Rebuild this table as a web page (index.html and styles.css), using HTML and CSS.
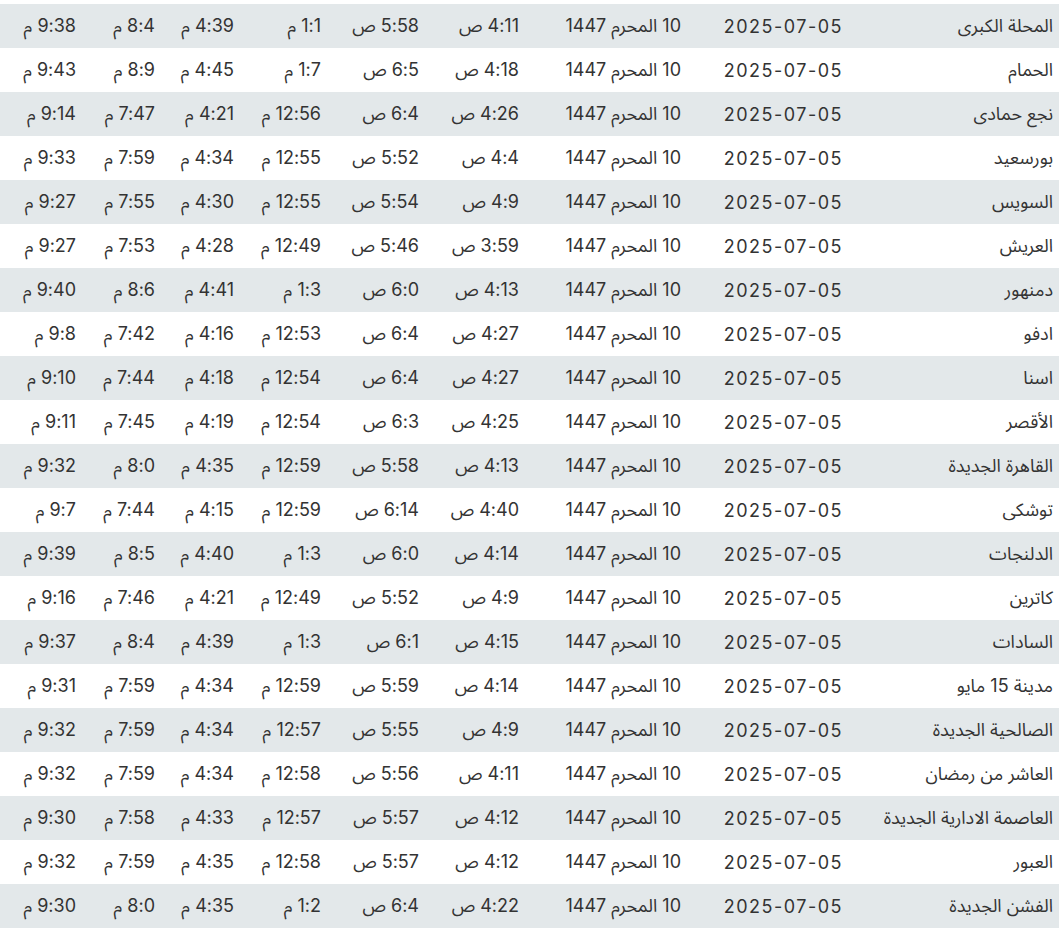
FILE: index.html
```html
<!DOCTYPE html>
<html lang="ar" dir="rtl">
<head>
<meta charset="utf-8">
<title>مواقيت الصلاة</title>
<link rel="stylesheet" href="styles.css">
</head>
<body>
<table class="times">
<colgroup>
<col class="c-city"><col class="c-date"><col class="c-hijri"><col class="c-fajr"><col class="c-sun"><col class="c-dhuhr"><col class="c-asr"><col class="c-maghrib"><col class="c-isha">
</colgroup>
<tbody>
<tr><td class="city">المحلة الكبرى</td><td class="date">2025-07-05</td><td>10 المحرم 1447</td><td>4:11 ص</td><td>5:58 ص</td><td>1:1 م</td><td>4:39 م</td><td>8:4 م</td><td>9:38 م</td></tr>
<tr><td class="city">الحمام</td><td class="date">2025-07-05</td><td>10 المحرم 1447</td><td>4:18 ص</td><td>6:5 ص</td><td>1:7 م</td><td>4:45 م</td><td>8:9 م</td><td>9:43 م</td></tr>
<tr><td class="city">نجع حمادى</td><td class="date">2025-07-05</td><td>10 المحرم 1447</td><td>4:26 ص</td><td>6:4 ص</td><td>12:56 م</td><td>4:21 م</td><td>7:47 م</td><td>9:14 م</td></tr>
<tr><td class="city">بورسعيد</td><td class="date">2025-07-05</td><td>10 المحرم 1447</td><td>4:4 ص</td><td>5:52 ص</td><td>12:55 م</td><td>4:34 م</td><td>7:59 م</td><td>9:33 م</td></tr>
<tr><td class="city">السويس</td><td class="date">2025-07-05</td><td>10 المحرم 1447</td><td>4:9 ص</td><td>5:54 ص</td><td>12:55 م</td><td>4:30 م</td><td>7:55 م</td><td>9:27 م</td></tr>
<tr><td class="city">العريش</td><td class="date">2025-07-05</td><td>10 المحرم 1447</td><td>3:59 ص</td><td>5:46 ص</td><td>12:49 م</td><td>4:28 م</td><td>7:53 م</td><td>9:27 م</td></tr>
<tr><td class="city">دمنهور</td><td class="date">2025-07-05</td><td>10 المحرم 1447</td><td>4:13 ص</td><td>6:0 ص</td><td>1:3 م</td><td>4:41 م</td><td>8:6 م</td><td>9:40 م</td></tr>
<tr><td class="city">ادفو</td><td class="date">2025-07-05</td><td>10 المحرم 1447</td><td>4:27 ص</td><td>6:4 ص</td><td>12:53 م</td><td>4:16 م</td><td>7:42 م</td><td>9:8 م</td></tr>
<tr><td class="city">اسنا</td><td class="date">2025-07-05</td><td>10 المحرم 1447</td><td>4:27 ص</td><td>6:4 ص</td><td>12:54 م</td><td>4:18 م</td><td>7:44 م</td><td>9:10 م</td></tr>
<tr><td class="city">الأقصر</td><td class="date">2025-07-05</td><td>10 المحرم 1447</td><td>4:25 ص</td><td>6:3 ص</td><td>12:54 م</td><td>4:19 م</td><td>7:45 م</td><td>9:11 م</td></tr>
<tr><td class="city">القاهرة الجديدة</td><td class="date">2025-07-05</td><td>10 المحرم 1447</td><td>4:13 ص</td><td>5:58 ص</td><td>12:59 م</td><td>4:35 م</td><td>8:0 م</td><td>9:32 م</td></tr>
<tr><td class="city">توشكى</td><td class="date">2025-07-05</td><td>10 المحرم 1447</td><td>4:40 ص</td><td>6:14 ص</td><td>12:59 م</td><td>4:15 م</td><td>7:44 م</td><td>9:7 م</td></tr>
<tr><td class="city">الدلنجات</td><td class="date">2025-07-05</td><td>10 المحرم 1447</td><td>4:14 ص</td><td>6:0 ص</td><td>1:3 م</td><td>4:40 م</td><td>8:5 م</td><td>9:39 م</td></tr>
<tr><td class="city">كاترين</td><td class="date">2025-07-05</td><td>10 المحرم 1447</td><td>4:9 ص</td><td>5:52 ص</td><td>12:49 م</td><td>4:21 م</td><td>7:46 م</td><td>9:16 م</td></tr>
<tr><td class="city">السادات</td><td class="date">2025-07-05</td><td>10 المحرم 1447</td><td>4:15 ص</td><td>6:1 ص</td><td>1:3 م</td><td>4:39 م</td><td>8:4 م</td><td>9:37 م</td></tr>
<tr><td class="city">مدينة 15 مايو</td><td class="date">2025-07-05</td><td>10 المحرم 1447</td><td>4:14 ص</td><td>5:59 ص</td><td>12:59 م</td><td>4:34 م</td><td>7:59 م</td><td>9:31 م</td></tr>
<tr><td class="city">الصالحية الجديدة</td><td class="date">2025-07-05</td><td>10 المحرم 1447</td><td>4:9 ص</td><td>5:55 ص</td><td>12:57 م</td><td>4:34 م</td><td>7:59 م</td><td>9:32 م</td></tr>
<tr><td class="city">العاشر من رمضان</td><td class="date">2025-07-05</td><td>10 المحرم 1447</td><td>4:11 ص</td><td>5:56 ص</td><td>12:58 م</td><td>4:34 م</td><td>7:59 م</td><td>9:32 م</td></tr>
<tr><td class="city">العاصمة الادارية الجديدة</td><td class="date">2025-07-05</td><td>10 المحرم 1447</td><td>4:12 ص</td><td>5:57 ص</td><td>12:57 م</td><td>4:33 م</td><td>7:58 م</td><td>9:30 م</td></tr>
<tr><td class="city">العبور</td><td class="date">2025-07-05</td><td>10 المحرم 1447</td><td>4:12 ص</td><td>5:57 ص</td><td>12:58 م</td><td>4:35 م</td><td>7:59 م</td><td>9:32 م</td></tr>
<tr><td class="city">الفشن الجديدة</td><td class="date">2025-07-05</td><td>10 المحرم 1447</td><td>4:22 ص</td><td>6:4 ص</td><td>1:2 م</td><td>4:35 م</td><td>8:0 م</td><td>9:30 م</td></tr>
</tbody>
</table>
</body>
</html>
```
FILE: styles.css
```css
html, body {
  margin: 0;
  padding: 0;
  background: #ffffff;
}
body {
  padding-top: 4px;
  font-family: "Inter", "Noto Sans Arabic", "Noto Naskh Arabic", "DejaVu Sans", sans-serif;
  color: #333333;
}
.times {
  width: 1059px;
  border-collapse: collapse;
  table-layout: fixed;
}
.c-city { width: 208px; }
.c-date { width: 162px; }
.c-hijri { width: 162px; }
.c-fajr { width: 100px; }
.c-sun { width: 98px; }
.c-dhuhr { width: 87px; }
.c-asr { width: 79px; }
.c-maghrib { width: 79px; }
.c-isha { width: 84px; }
.times td {
  height: 44px;
  padding: 0 8px 0 0;
  text-align: right;
  vertical-align: middle;
  white-space: nowrap;
  font-size: 18px;
  letter-spacing: 0.3px;
  box-sizing: border-box;
}
.times tr:nth-child(odd) td {
  background: #e3e8ea;
}
.times td.city {
  padding-right: 6px;
  letter-spacing: 0;
}
.times td.date {
  letter-spacing: 1.5px;
}
```
